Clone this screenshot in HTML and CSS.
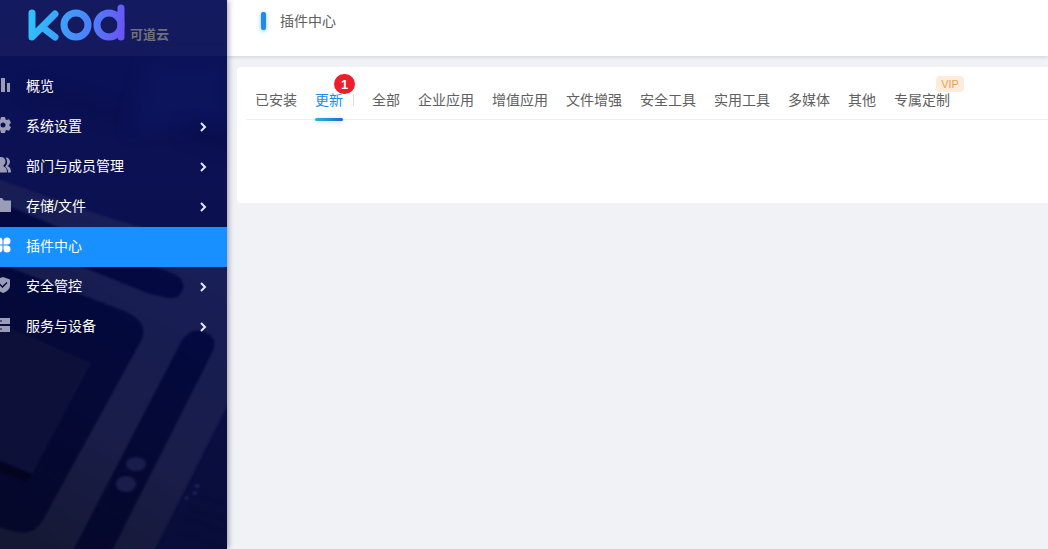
FILE: index.html
```html
<!DOCTYPE html>
<html lang="zh-CN">
<head>
    <meta charset="UTF-8">
    <meta name="viewport" content="width=device-width, initial-scale=1.0">
    <title>插件中心</title>
    <link rel="stylesheet" href="styles.css">
</head>
<body>

    <aside class="sidebar">
        <svg class="sidebar-bg" viewBox="0 0 227 549" preserveAspectRatio="xMinYMin slice" color-interpolation-filters="sRGB" aria-hidden="true">
            <defs>
                <linearGradient id="base" x1="0" y1="0" x2="0" y2="1">
                    <stop offset="0" stop-color="#0b1159"/>
                    <stop offset="0.4" stop-color="#0b1150"/>
                    <stop offset="1" stop-color="#090d38"/>
                </linearGradient>
                <linearGradient id="frame" gradientUnits="userSpaceOnUse" x1="200" y1="250" x2="20" y2="549">
                    <stop offset="0" stop-color="#181e58"/>
                    <stop offset="0.6" stop-color="#191d48"/>
                    <stop offset="1" stop-color="#151832"/>
                </linearGradient>
                <linearGradient id="dark" gradientUnits="userSpaceOnUse" x1="200" y1="250" x2="20" y2="549">
                    <stop offset="0" stop-color="#040a46"/>
                    <stop offset="1" stop-color="#050828"/>
                </linearGradient>
                <filter id="soft"><feGaussianBlur stdDeviation="1"/></filter>
                <filter id="haze" x="-50%" y="-100%" width="200%" height="300%"><feGaussianBlur stdDeviation="8"/></filter>
            </defs>
            <rect width="227" height="549" fill="url(#base)"/>
            <path d="M150 60L227 60V120L130 130Z" fill="#0c145c" filter="url(#haze)"/>
            <path d="M30 90L125 118M185 128L240 148" stroke="#060c46" stroke-width="8" filter="url(#haze)"/>
            <g filter="url(#soft)">
                <path d="M-5 178L110 218L240 256V380L155 549L145 560H-5Z" fill="url(#frame)"/>
                <path d="M-5 200L60 228L174 274Q186 280 183 289Q179 300 168 298L150 294L85 268L-5 230Z" fill="url(#dark)"/>
                <path d="M-5 262L122 310Q149 321 142 339L43 520Q34 536 16 532L-5 526Z" fill="url(#dark)"/>
                <path d="M-5 322L91 363L32 474L-5 459Z" fill="#0d113a"/>
                <path d="M-5 459L32 474L26 482L-5 470Z" fill="#03051f"/>
                <path d="M182 340Q190 328 202 331Q219 336 213 351L113 549L106 560H68Z" fill="url(#dark)"/>
                <ellipse cx="136" cy="464" rx="10" ry="7" fill="#191d4b"/>
                <ellipse cx="126" cy="484" rx="10" ry="8" fill="#191d4b"/>
                <path d="M185 518L227 532M190 508L227 520M178 532L227 549M195 495L227 505" stroke="#080c36" stroke-width="1"/>
                <path d="M195 486h4M193 493h4M185 498h3" stroke="#20265c" stroke-width="3"/>
            </g>
        </svg>

        <a class="logo" href="#">
            <svg class="logo-mark" viewBox="0 0 98 40" fill="none" stroke="url(#brand)" stroke-width="7" stroke-linecap="round" stroke-linejoin="round" role="img" aria-label="kod">
                <defs>
                    <linearGradient id="brand" gradientUnits="userSpaceOnUse" x1="0" y1="12" x2="96" y2="34">
                        <stop offset="0" stop-color="#2cc4f8"/>
                        <stop offset="0.5" stop-color="#4590fb"/>
                        <stop offset="1" stop-color="#6b52f6"/>
                    </linearGradient>
                </defs>
                <path d="M4 9V33L27 10M14 23L27 33"/>
                <circle cx="48" cy="21" r="12"/>
                <circle cx="81" cy="21" r="12"/>
                <path d="M93 4V33"/>
            </svg>
            <span class="logo-name">可道云</span>
        </a>

        <nav class="menu">
            <a class="menu-item" href="#">
                <svg class="menu-icon" viewBox="0 0 16 16"><path d="M1 6h3v9H1zM6 1h4v14H6zM12 6h3v9h-3z"/></svg>
                <span>概览</span>
            </a>
            <a class="menu-item" href="#">
                <svg class="menu-icon" viewBox="0 0 16 16"><path fill-rule="evenodd" d="M6 0h4l.6 2.400 1 .6L14 2.300l2 3.400L14.300 7.400v1.200L16 10.300l-2 3.400-2.400-.7-1 .6L10 16H6l-.6-2.400-1-.6-2.400.7-2-3.400L1.700 8.600V7.400L0 5.700l2-3.400 2.400.7 1-.6zM8 5.500a2.500 2.500 0 1 0 0 5 2.500 2.500 0 0 0 0-5z"/></svg>
                <span>系统设置</span>
                <svg class="arrow" viewBox="0 0 8 10"><path d="M2 1l4 4-4 4"/></svg>
            </a>
            <a class="menu-item" href="#">
                <svg class="menu-icon" viewBox="0 0 16 16"><path d="M6 0a4.500 4.500 0 0 1 2.500 8.200V9.500C11 10.500 12 12 12 15.500H0c0-3 1-5 3.500-6V8.200A4.500 4.500 0 0 1 6 0zM10.500.5c5 0 6 6 2 8.500 2.500 1 3.500 3 3.500 6.500h-3c0-3-1-4.500-3-6 2.500-2 3-6 .5-9z"/></svg>
                <span>部门与成员管理</span>
                <svg class="arrow" viewBox="0 0 8 10"><path d="M2 1l4 4-4 4"/></svg>
            </a>
            <a class="menu-item" href="#">
                <svg class="menu-icon" viewBox="0 0 16 16"><path d="M0 1h7l2 2.500h7V15H0z"/></svg>
                <span>存储/文件</span>
                <svg class="arrow" viewBox="0 0 8 10"><path d="M2 1l4 4-4 4"/></svg>
            </a>
            <a class="menu-item active" href="#">
                <svg class="menu-icon" viewBox="0 0 16 16"><path d="M4 .5A3.500 3.500 0 0 1 7.500 4v3.500H4a3.500 3.500 0 0 1 0-7zM12 .5a3.500 3.500 0 0 1 0 7H8.500V4A3.500 3.500 0 0 1 12 .5zM4 8.500h3.500V12A3.500 3.500 0 1 1 4 8.500zM8.500 8.500H12A3.500 3.500 0 1 1 8.500 12z"/></svg>
                <span>插件中心</span>
            </a>
            <a class="menu-item" href="#">
                <svg class="menu-icon" viewBox="0 0 16 16"><path fill-rule="evenodd" d="M8 0l7 2.500v6C15 12 12 14.500 8 16 4 14.500 1 12 1 8.500v-6zM4 7.500L7.500 11l5-5-1-1-4 4L5 6.500z"/></svg>
                <span>安全管控</span>
                <svg class="arrow" viewBox="0 0 8 10"><path d="M2 1l4 4-4 4"/></svg>
            </a>
            <a class="menu-item" href="#">
                <svg class="menu-icon" viewBox="0 0 16 16"><path fill-rule="evenodd" d="M0 1h15v6H0zM0 9h15v6H0zM3 3.500v1h4v-1zM3 11.500v1h4v-1z"/></svg>
                <span>服务与设备</span>
                <svg class="arrow" viewBox="0 0 8 10"><path d="M2 1l4 4-4 4"/></svg>
            </a>
        </nav>
    </aside>

    <main class="main">
        <header class="header">
            <h1 class="title">插件中心</h1>
        </header>

        <section class="panel">
            <div class="tabs">
                <button type="button" class="tab">已安装</button>
                <button type="button" class="tab selected">更新<span class="count">1</span></button>
                <span class="divider"></span>
                <button type="button" class="tab">全部</button>
                <button type="button" class="tab">企业应用</button>
                <button type="button" class="tab">增值应用</button>
                <button type="button" class="tab">文件增强</button>
                <button type="button" class="tab">安全工具</button>
                <button type="button" class="tab">实用工具</button>
                <button type="button" class="tab">多媒体</button>
                <button type="button" class="tab">其他</button>
                <button type="button" class="tab">专属定制<span class="vip">VIP</span></button>
            </div>
        </section>
    </main>

</body>
</html>
```
FILE: styles.css
```css
* {
    box-sizing: border-box;
}

body {
    margin: 0;
    display: flex;
    min-height: 100vh;
    background-color: #f0f2f6;
    color: #606060;
    font-family: "Liberation Sans", "Noto Sans CJK SC", sans-serif;
    font-size: 14px;
    overflow-x: hidden;
}

a {
    color: inherit;
    text-decoration: none;
}

/* sidebar */
.sidebar {
    position: relative;
    z-index: 2;
    flex: 0 0 227px;
    background-color: #090d38;
    box-shadow: 1px 0 6px rgba(0, 10, 60, 0.4);
}

.sidebar-bg {
    position: absolute;
    top: 0;
    left: 0;
    width: 100%;
    height: 100%;
}

.logo {
    position: relative;
    display: flex;
    align-items: flex-end;
    gap: 4px;
    height: 56px;
    padding: 0 0 12px 28px;
    background-color: rgba(255, 255, 255, 0.04);
}

.logo-mark {
    width: 98px;
    height: 40px;
}

.logo-name {
    color: #716f7a;
    font-size: 13px;
    font-weight: bold;
    line-height: 18px;
}

.menu {
    position: relative;
    padding-top: 11px;
}

.menu-item {
    display: flex;
    align-items: center;
    height: 40px;
    padding: 0 20px 4px 0;
    color: #fff;
}

.menu-item.active {
    background-color: #1890ff;
}

.menu-icon {
    width: 16px;
    height: 16px;
    margin: 0 15px 0 -5px;
    fill: #9b9db8;
}

.active .menu-icon {
    fill: #fff;
}

.arrow {
    width: 8px;
    height: 10px;
    margin: 4px 0 0 auto;
    fill: none;
    stroke: #e6e8f5;
    stroke-width: 2;
}

/* content */
.main {
    flex: 1;
    min-width: 0;
}

.header {
    height: 56px;
    padding: 6px 34px;
    background-color: #fff;
    box-shadow: 0 1px 4px rgba(0, 20, 60, 0.15);
}

.title {
    display: flex;
    align-items: center;
    gap: 14px;
    margin: 0;
    font-size: 14px;
    font-weight: normal;
    line-height: 30px;
}

.title::before {
    content: "";
    width: 5px;
    height: 18px;
    border-radius: 2px;
    background-color: #2189f0;
    box-shadow: 0 1px 4px rgba(24, 144, 255, 0.5);
}

.panel {
    min-height: 136px;
    margin: 11px 0 0 10px;
    padding-left: 9px;
    border-radius: 4px 0 0 4px;
    background-color: #fff;
}

.tabs {
    display: flex;
    gap: 18px;
    padding: 22px 0 8px 9px;
    border-bottom: 1px solid #eee;
}

.tab {
    position: relative;
    flex: none;
    padding: 0;
    border: none;
    background: none;
    color: #606060;
    font: inherit;
    line-height: 22px;
    cursor: pointer;
}

.tab.selected {
    color: #2088e8;
}

.tab.selected::after {
    content: "";
    position: absolute;
    left: 0;
    right: 0;
    bottom: -10px;
    height: 3px;
    border-radius: 2px;
    background: linear-gradient(to right, #2bb5d8, #1c68d8);
    box-shadow: 0 1px 4px rgba(24, 144, 255, 0.3);
}

.count {
    position: absolute;
    top: -15px;
    right: -12px;
    width: 21px;
    height: 20px;
    border-radius: 10px;
    background-color: #ee1f2d;
    color: #fff;
    font-size: 13px;
    font-weight: bold;
    line-height: 21px;
    text-align: center;
}

.divider {
    align-self: center;
    width: 1px;
    height: 12px;
    margin: 0 0 0 -8px;
    background-color: #ddd;
}

.vip {
    position: absolute;
    top: -13px;
    right: -14px;
    width: 28px;
    height: 16px;
    border-radius: 4px;
    background-color: #fdebdc;
    color: #eda04c;
    font-size: 11px;
    line-height: 16px;
    text-align: center;
}
```
